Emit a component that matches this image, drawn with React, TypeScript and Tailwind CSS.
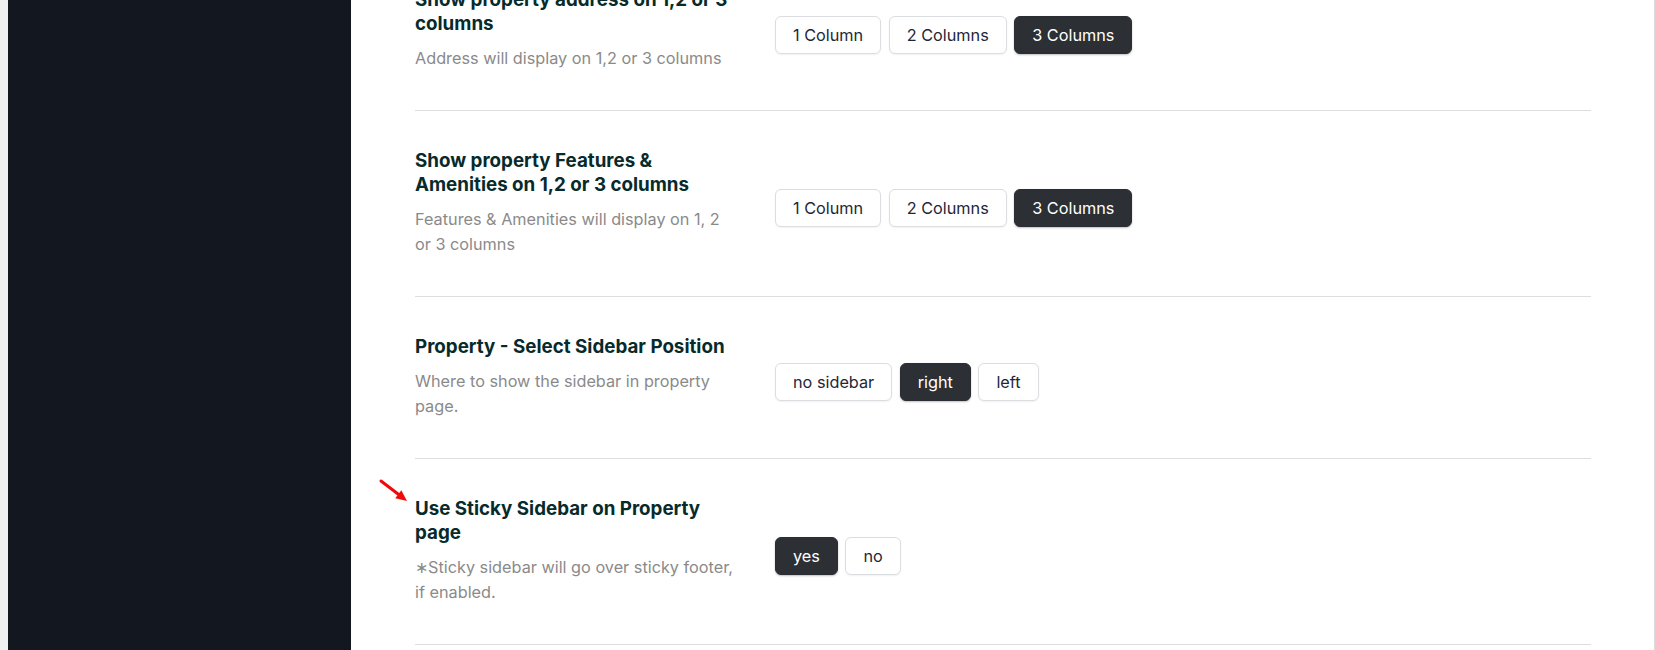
import React from "react";

type Setting = {
  title: string;
  desc: string;
  options: string[];
  active: string;
  marked?: boolean;
};

const settings: Setting[] = [
  {
    title: "Show property address on 1,2 or 3 columns",
    desc: "Address will display on 1,2 or 3 columns",
    options: ["1 Column", "2 Columns", "3 Columns"],
    active: "3 Columns",
  },
  {
    title: "Show property Features & Amenities on 1,2 or 3 columns",
    desc: "Features & Amenities will display on 1, 2 or 3 columns",
    options: ["1 Column", "2 Columns", "3 Columns"],
    active: "3 Columns",
  },
  {
    title: "Property - Select Sidebar Position",
    desc: "Where to show the sidebar in property page.",
    options: ["no sidebar", "right", "left"],
    active: "right",
  },
  {
    title: "Use Sticky Sidebar on Property page",
    desc: "∗Sticky sidebar will go over sticky footer, if enabled.",
    options: ["yes", "no"],
    active: "yes",
    marked: true,
  },
];

// red annotation arrow pointing at the setting title
const Arrow = () => (
  <svg
    className="absolute left-[-37px] top-[19px] w-[32px] h-[26px]"
    viewBox="0 0 32 26"
    fill="none"
  >
    <line x1="3" y1="3" x2="21" y2="16.8" stroke="#f00a0a" strokeWidth="3" strokeLinecap="round" />
    <polygon points="29,23 17.25,20.27 23.35,12.33" fill="#f00a0a" />
  </svg>
);

const OptionButton = ({ label, active }: { label: string; active: boolean }) => (
  <button
    className={
      active
        ? "rounded-[6px] border border-[#2a2d32] bg-[#2c2f34] px-[17px] py-[6px] text-[16.25px] leading-6 text-white shadow-[0_1px_2px_rgba(0,0,0,0.25)]"
        : "rounded-[6px] border border-[#dcdde1] bg-white px-[17px] py-[6px] text-[16.25px] leading-6 text-[#1d2738] shadow-[0_1px_2px_rgba(0,0,0,0.06)]"
    }
  >
    {label}
  </button>
);

const SettingRow = ({ s }: { s: Setting }) => (
  <div className="flex items-center border-b border-[#dedede]">
    <div className="relative w-[320px] shrink-0 py-[38px]">
      {s.marked && <Arrow />}
      <h3 className="text-[18.75px] font-bold leading-6 text-[#072a2b]">{s.title}</h3>
      <p className="mt-[10px] text-[16.25px] leading-[25.5px] text-[#8a8a8a]">{s.desc}</p>
    </div>
    <div className="ml-[40px] mt-[10px] flex gap-[7.5px]">
      {s.options.map((o) => (
        <OptionButton key={o} label={o} active={o === s.active} />
      ))}
    </div>
  </div>
);

export default function App() {
  return (
    <div className="flex h-[650px] w-full overflow-hidden bg-white font-[Inter,sans-serif]">
      <div className="w-[8px] shrink-0 bg-[#f0f0f1]" />
      <aside className="w-[343px] shrink-0 bg-[#131720]" />
      <main className="flex-1 overflow-hidden border-r border-[#dcdcde] pl-[64px] pr-[63px]">
        <div className="mt-[-50px]">
          {settings.map((s) => (
            <SettingRow key={s.title} s={s} />
          ))}
        </div>
      </main>
    </div>
  );
}
